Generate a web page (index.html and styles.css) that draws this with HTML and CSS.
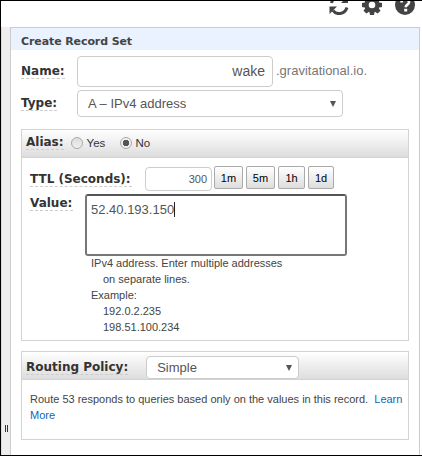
FILE: index.html
```html
<!DOCTYPE html>
<html lang="en">
<head>
<meta charset="utf-8">
<title>Create Record Set</title>
<link rel="stylesheet" href="styles.css">
</head>
<body>
<div class="window">
  <header class="toolbar">
    <svg class="icon refresh" viewBox="0 0 20 20" width="20" height="20"><path d="M2.500 8A7.700 7.700 0 0 1 16 5M18 12.500C15.500 20 7 20 4 15.500" fill="none" stroke="#444" stroke-width="3"/><path d="M19 1v7h-7zM.5 19v-7.500h7.500z" fill="#444"/></svg>
    <svg class="icon gear" viewBox="0 0 20 20" width="20" height="20"><g fill="#444"><path id="tooth" d="M8 0h4l1 5H7z"/><use href="#tooth" transform="rotate(45 10 10)"/><use href="#tooth" transform="rotate(90 10 10)"/><use href="#tooth" transform="rotate(135 10 10)"/><use href="#tooth" transform="rotate(180 10 10)"/><use href="#tooth" transform="rotate(225 10 10)"/><use href="#tooth" transform="rotate(270 10 10)"/><use href="#tooth" transform="rotate(315 10 10)"/></g><circle cx="10" cy="10" r="5.300" fill="none" stroke="#444" stroke-width="4"/></svg>
    <svg class="icon help" viewBox="0 0 20 20" width="20" height="20"><circle cx="10" cy="10" r="10" fill="#444"/><path d="M6.500 7.500C6.500 3 14 3.500 14 7.200c0 2.500-3.300 2.300-3.300 5" fill="none" stroke="#fff" stroke-width="2.600"/><path d="M9.200 13.800h3v2.700h-3z" fill="#fff"/></svg>
  </header>
  <main class="content">
    <div class="splitter"><i></i><i></i></div>
    <section class="panel">
      <h1 class="title">Create Record Set</h1>
      <div class="row name-row">
        <span class="label">Name:</span>
        <div class="field name">wake</div>
        <span class="domain">.gravitational.io.</span>
      </div>
      <div class="row type-row">
        <span class="label">Type:</span>
        <div class="field select type"><span>A – IPv4 address</span><b class="arrow"></b></div>
      </div>
      <div class="box alias">
        <div class="bar">
          <span class="label">Alias:</span>
          <i class="radio"></i><span class="option yes">Yes</span>
          <i class="radio checked"></i><span class="option">No</span>
        </div>
        <div class="ttl-row">
          <span class="label">TTL (Seconds):</span>
          <div class="field ttl">300</div>
          <div class="buttons"><button class="wide">1m</button><button class="wide">5m</button><button class="mid">1h</button><button>1d</button></div>
        </div>
        <div class="value-row">
          <span class="label">Value:</span>
          <div class="value"><span>52.40.193.150</span><i class="caret"></i></div>
        </div>
        <div class="hint">
          <p>IPv4 address. Enter multiple addresses</p>
          <p class="indent">on separate lines.</p>
          <p>Example:</p>
          <p class="indent">192.0.2.235</p>
          <p class="indent">198.51.100.234</p>
        </div>
      </div>
      <div class="box routing">
        <div class="bar">
          <span class="label">Routing Policy:</span>
          <div class="field select policy"><span>Simple</span><b class="arrow"></b></div>
        </div>
        <p class="note">Route 53 responds to queries based only on the values in this record. &nbsp;<a>Learn<br>More</a></p>
      </div>
    </section>
  </main>
</div>
</body>
</html>
```
FILE: styles.css
```css
* { box-sizing: border-box; }
body { margin: 0; background: #fff; color: #444; font: 11px/16px "Liberation Sans", Arial, sans-serif; }
p { margin: 0; }
.window { width: 422px; height: 456px; border: solid #000; border-width: 1px 0 1px 1px; overflow: hidden; display: flex; flex-direction: column; }
.toolbar { height: 26px; flex: none; display: flex; justify-content: flex-end; gap: 13px; padding-right: 7px; overflow: hidden; }
.icon { margin-top: -6px; flex: none; }
.content { flex: 1; display: flex; }
.splitter { width: 9px; background: #eee; border-left: 1px solid #ddd; display: flex; justify-content: center; align-items: flex-end; gap: 1px; padding-bottom: 23px; }
.splitter i { width: 1px; height: 7px; background: #333; }
.panel { width: 410px; border: solid #ccc; border-width: 1px 1px 0; }
.title { margin: 0 0 6px; height: 22px; padding: 3px 0 0 10px; background: #eaf2ff; font: bold 11px/22px "DejaVu Sans", Verdana, sans-serif; letter-spacing: -0.1px; }
.row { display: flex; padding-left: 10px; }
.label { flex: none; height: 17px; border-bottom: 1px dashed #ccc; color: #333; font: bold 12px/18px "DejaVu Sans", Verdana, sans-serif; white-space: nowrap; }
.field { flex: none; border: 1px solid #ccc; border-radius: 4px; background: #fff; color: #555; font-size: 13px; }
.row .label { margin-top: 6px; }
.name-row { height: 34px; }
.row .field { margin-left: auto; }
.name { width: 196px; height: 31px; padding-right: 7px; line-height: 29px; text-align: right; font-size: 14px; }
.domain { width: 146px; padding-left: 3px; color: #777; font-size: 13px; line-height: 30px; }
.type-row { height: 39px; }
.type-row .label { margin-top: 4px; }
.select { display: flex; align-items: center; justify-content: space-between; }
.type { width: 266px; height: 27px; padding: 0 6px 0 10px; margin-right: 76px; }
.arrow { border: solid transparent; border-width: 6px 3px 0; border-top-color: #555; }
.box { width: 388px; margin-left: 10px; border: 1px solid #d3d3d3; }
.alias { height: 212px; }
.bar { height: 28px; display: flex; border-bottom: 1px solid #d3d3d3; background: linear-gradient(#fff, #ddd); padding-left: 4px; }
.bar .label { margin-top: 3px; }
.radio { width: 12px; height: 12px; margin: 7px 0 0 7px; border: 1px solid #aaa; border-radius: 50%; background: linear-gradient(#ddd, #f0f0f0); }
.radio.checked { background: radial-gradient(circle, #555 0 3px, #eee 3.5px); }
.option { margin: 5px 0 0 4px; font-size: 11.5px; color: #333; }
.yes { width: 26px; }
.ttl-row { display: flex; height: 36px; padding: 8px 0 0 8px; }
.ttl-row .label { margin-top: 4px; width: 102px; }
.ttl { width: 67px; height: 24px; margin: 1px 0 0 13px; padding-right: 4px; text-align: right; font-size: 11px; line-height: 23px; }
.buttons { display: flex; gap: 3px; margin-left: 2px; }
button { width: 26px; height: 23px; padding: 0; border: 1px solid #aaa; border-radius: 2px; background: linear-gradient(#fff, #ddd); color: #000; font: 11px "Liberation Sans", Arial, sans-serif; }
button.wide { width: 29px; }
button.mid { width: 27px; }
.value-row { display: flex; padding-left: 8px; height: 62px; }
.value-row .label { margin-top: 0; width: 43px; }
.value { display: flex; width: 262px; height: 62px; margin-left: 12px; border: 2px solid #777; border-top-color: #555; border-radius: 3px; padding: 6px 0 0 4px; color: #555; font-size: 13px; }
.caret { width: 1px; height: 15px; background: #222; }
.hint { margin-top: -1px; padding-left: 69px; }
.hint .indent { padding-left: 12px; }
.routing { height: 89px; margin-top: 10px; }
.routing .label { margin-top: 6px; }
.policy { width: 153px; height: 23px; margin: 4px 0 0 18px; padding: 0 6px 0 10px; }
.note { padding: 11px 0 0 8px; white-space: nowrap; }
.note a { color: #1166bb; }
```
